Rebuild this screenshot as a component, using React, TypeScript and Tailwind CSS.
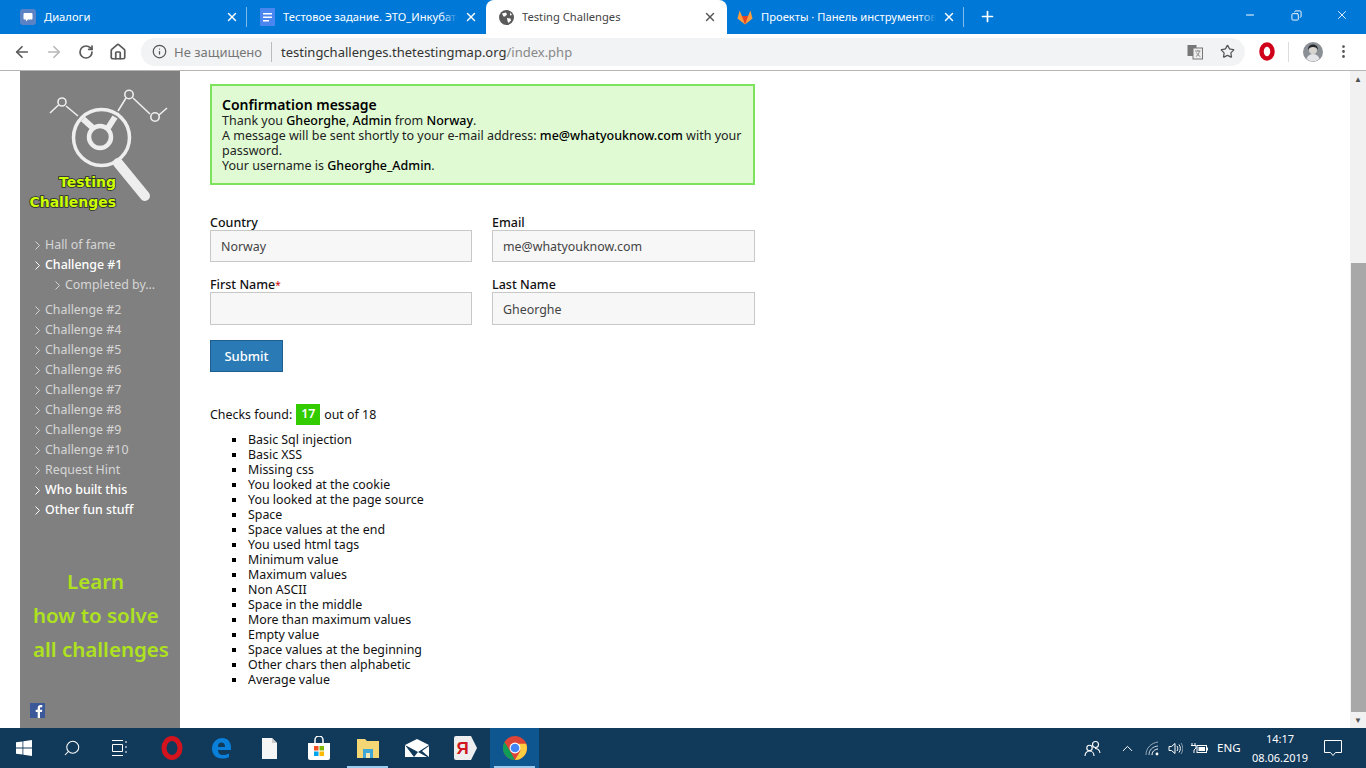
import { ArrowLeft, ArrowRight, RotateCw, Home, Info, Star, X, Plus, Minus, Copy, MoreVertical, Search, ChevronUp } from "lucide-react";

const FONT = "font-['Noto_Sans',sans-serif]";

// ─── Browser chrome ───────────────────────────────────────────────────────────

function ChatFavicon() {
  return (
    <svg width="16" height="16" viewBox="0 0 16 16">
      <rect width="16" height="16" rx="3" fill="#5b82c4" />
      <path d="M4.500 4h7a1 1 0 0 1 1 1v4.500a1 1 0 0 1-1 1H8L6 12.500V10.500H4.500a1 1 0 0 1-1-1V5a1 1 0 0 1 1-1z" fill="#fff" />
    </svg>
  );
}

function DocsFavicon() {
  return (
    <svg width="15" height="18" viewBox="0 0 15 18">
      <rect width="15" height="18" rx="1" fill="#4a86f0" />
      <path d="M3 5h9v1.500H3zM3 8.500h9V10H3zM3 12h6v1.500H3z" fill="#fff" />
    </svg>
  );
}

function GlobeFavicon() {
  return (
    <svg width="15" height="15" viewBox="0 0 15 15">
      <circle cx="7.500" cy="7.500" r="7.500" fill="#5a5a5a" />
      <path d="M3 3.500 7 2.500 8 4.500 6 6.500 4.500 6.500zM8 8l3.500.5.5 2-2.500 2.500-1-2zM11 2.500l2 2.500-2 .5z" fill="#fff" />
    </svg>
  );
}

function GitlabFavicon() {
  return (
    <svg width="17" height="16" viewBox="0 0 17 16">
      <path d="M8.500 16 0.500 9.500 2.800 1l2.400 6h6.600l2.400-6 2.300 8.500z" fill="#fc9d3c" />
      <path d="M8.500 16 5.200 7h6.600z" fill="#e24329" />
    </svg>
  );
}

function Tab({ icon, title, active, divider }: { icon: React.ReactNode; title: string; active?: boolean; divider?: boolean }) {
  return (
    <div className={`relative flex h-[34px] w-[239px] items-center pr-[8px] pl-[12px] ${active ? "mr-[-2px] w-[241px] rounded-t-lg bg-white pr-[10px] text-[#444]" : "text-white"}`}>
      <div className="flex w-[16px] shrink-0 items-center justify-center">{icon}</div>
      <div className="relative mr-[6px] ml-[8px] flex-1 overflow-hidden text-[11.2px] whitespace-nowrap">
        {title}
        {!active && <div className="absolute top-0 right-0 h-full w-[16px] bg-gradient-to-r from-transparent to-[#0078d7]" />}
      </div>
      <X size={14} strokeWidth={2.4} className={active ? "text-[#555]" : "text-white"} />
      {divider && <div className="absolute top-[7px] right-0 h-[20px] w-px bg-white/50" />}
    </div>
  );
}

function TabStrip() {
  return (
    <div className="flex h-[34px] items-start bg-[#0078d7] pl-[8px]">
      <Tab icon={<ChatFavicon />} title="Диалоги" divider />
      <Tab icon={<DocsFavicon />} title="Тестовое задание. ЭТО_Инкубатор" />
      <Tab icon={<GlobeFavicon />} title="Testing Challenges" active />
      <Tab icon={<GitlabFavicon />} title="Проекты · Панель инструментов" divider />
      <Plus size={17} strokeWidth={2.4} className="mt-[8px] ml-[15px] text-white" />
      <div className="mr-px ml-auto flex items-start text-white">
        <div className="flex h-[30px] w-[46px] items-center justify-center"><Minus size={12} /></div>
        <div className="flex h-[30px] w-[46px] items-center justify-center"><Copy size={11} className="-scale-x-100" /></div>
        <div className="flex h-[30px] w-[46px] items-center justify-center"><X size={14} strokeWidth={1.5} /></div>
      </div>
    </div>
  );
}

function Toolbar() {
  return (
    <div className="flex h-[37px] items-center border-b border-[#b5b5b5] bg-white pb-px">
      <div className="flex w-[141px] items-center pl-[13px] text-[#5a5a5a]">
        <ArrowLeft size={18} strokeWidth={2.3} />
        <ArrowRight size={18} strokeWidth={2.3} className="ml-[14px] text-[#b8b8b8]" />
        <RotateCw size={16} strokeWidth={2.6} className="ml-[15px]" />
        <Home size={18} strokeWidth={2.3} className="ml-[15px]" />
      </div>
      <div className="flex h-[28px] w-[1104px] items-center rounded-full bg-[#f1f3f4] pl-[11px] text-[13px]">
        <Info size={15} className="text-[#555]" />
        <span className="ml-[7px] pt-[2px] text-[#777]">Не защищено</span>
        <div className="mx-[9px] h-[20px] w-px bg-[#bbb]" />
        <span className="pt-[2px] text-[#333]">testingchallenges.thetestingmap.org</span>
        <span className="pt-[2px] text-[#888]">/index.php</span>
        <svg width="16" height="16" viewBox="0 0 16 16" className="mr-[17px] ml-auto">
          <rect x="0.500" y="1" width="9" height="11" fill="#777" />
          <rect x="6" y="4" width="9.500" height="11" fill="#eee" stroke="#777" />
          <path d="M8 7h5.500M10.800 6v1M9 12.500c2-1 3-3 3.300-5.500M9.500 8.500c.7 2 2 3.200 3.800 4" stroke="#777" fill="none" strokeWidth=".8" />
        </svg>
        <Star size={15} strokeWidth={2} className="mr-[10px] text-[#555]" />
      </div>
      <svg width="16" height="19" viewBox="0 0 16 19" className="ml-[14px]">
        <ellipse cx="8" cy="9.500" rx="5.500" ry="7" fill="none" stroke="#d0021b" strokeWidth="4.500" />
      </svg>
      <div className="ml-[13px] h-[20px] w-px bg-[#ddd]" />
      <svg width="20" height="20" viewBox="0 0 20 20" className="ml-[14px]">
        <circle cx="10" cy="10" r="10" fill="#8b8f96" />
        <circle cx="10" cy="8" r="4" fill="#d8d4d0" />
        <path d="M5 8c0-4 2.500-5.500 5-5.500S15 4 15 8c-1-2-2.500-3-5-3S6 6 5 8z" fill="#26282c" />
        <path d="M3.500 17c1-3.500 3.500-5 6.500-5s5.500 1.500 6.500 5a10 10 0 0 1-13 0z" fill="#e3e5e8" />
      </svg>
      <MoreVertical size={17} className="ml-[12px] text-[#555]" />
    </div>
  );
}

// ─── Sidebar ──────────────────────────────────────────────────────────────────

function Logo() {
  return (
    <svg width="160" height="150" viewBox="0 0 160 150" className="shrink-0">
      <g fill="none" stroke="#eee" strokeWidth="1.600">
        <path d="M30 42 38.500 34M46 35 58 45M98 40 106 27M113 27 130 43M139 44 147 37" />
        <circle cx="42" cy="31" r="4" />
        <circle cx="109" cy="23.500" r="4.200" />
        <circle cx="135" cy="46" r="4.200" />
      </g>
      <circle cx="81.500" cy="66.500" r="28" fill="none" stroke="#eee" strokeWidth="3.500" />
      <circle cx="80" cy="66" r="11" fill="none" stroke="#eee" strokeWidth="4.500" />
      <path d="M63 48 73 57M95 46 88 57" stroke="#eee" strokeWidth="6" />
      <path d="M98 92 125 125" stroke="#eee" strokeWidth="10" strokeLinecap="round" />
      <text x="96" y="115.500" textAnchor="end" fill="#ccff00" stroke="#2a2a2a" strokeWidth="1.600" paintOrder="stroke" className="font-['DejaVu_Sans',sans-serif] text-[14px] font-bold">Testing</text>
      <text x="96" y="135.500" textAnchor="end" fill="#ccff00" stroke="#2a2a2a" strokeWidth="1.600" paintOrder="stroke" className="font-['DejaVu_Sans',sans-serif] text-[14px] font-bold">Challenges</text>
    </svg>
  );
}

function NavItem({ label, bright, sub }: { label: string; bright?: boolean; sub?: boolean }) {
  return (
    <div className={`flex h-[20px] items-center ${sub ? "pl-[35px]" : "pl-[15px]"} ${bright ? "font-medium text-white" : "text-[#d6d6d6]"}`}>
      <svg width="10" height="9" viewBox="0 0 10 9" fill="none" stroke="currentColor" className="shrink-0"><path d="M.5.500 4.500 4.500.5 8.500" /></svg>
      <span>{label}</span>
    </div>
  );
}

function Sidebar() {
  return (
    <aside className="flex w-[160px] shrink-0 flex-col bg-[#808080] text-[12.4px]">
      <Logo />
      <div className="mt-[14px]">
        <NavItem label="Hall of fame" />
        <NavItem label="Challenge #1" bright />
        <NavItem label="Completed by..." sub />
        <div className="mt-[5px]">
          {["#2", "#4", "#5", "#6", "#7", "#8", "#9", "#10"].map((n) => (
            <NavItem key={n} label={`Challenge ${n}`} />
          ))}
        </div>
        <NavItem label="Request Hint" />
        <NavItem label="Who built this" bright />
        <NavItem label="Other fun stuff" bright />
      </div>
      <div className="mt-[44px] pl-[13px] text-[20.5px] leading-[34px] font-semibold text-[#aee21e]">
        <div className="pl-[34px]">Learn</div>
        <div>how to solve</div>
        <div>all challenges</div>
      </div>
      <svg width="15" height="15" viewBox="0 0 15 15" className="mt-[37px] ml-[10px]">
        <rect width="15" height="15" fill="#3b5998" />
        <path d="M10 15V9h2l.3-2.300H10V5.300c0-.7.2-1.100 1.100-1.100h1.200v-2C12 2.100 11.400 2 10.600 2 8.900 2 7.700 3 7.700 5v1.700H5.700V9h2v6z" fill="#fff" />
      </svg>
    </aside>
  );
}

// ─── Main content ─────────────────────────────────────────────────────────────

function Field({ label, value, required, tall, wide }: { label: string; value: string; required?: boolean; tall?: boolean; wide?: boolean }) {
  return (
    <div className={wide ? "w-[263px]" : "w-[262px]"}>
      <div className="h-[15px] text-[12.5px] leading-[16px] font-medium text-[#111]">
        {label}
        {required && <span className="text-[10px] font-normal text-[#c00]">*</span>}
      </div>
      <div className={`flex items-center border border-[#c8c8c8] bg-[#f7f7f7] px-[10px] pt-[3px] text-[#444] ${tall ? "h-[33px]" : "h-[32px]"}`}>
        {value}
      </div>
    </div>
  );
}

const CHECKS = [
  "Basic Sql injection",
  "Basic XSS",
  "Missing css",
  "You looked at the cookie",
  "You looked at the page source",
  "Space",
  "Space values at the end",
  "You used html tags",
  "Minimum value",
  "Maximum values",
  "Non ASCII",
  "Space in the middle",
  "More than maximum values",
  "Empty value",
  "Space values at the beginning",
  "Other chars then alphabetic",
  "Average value",
];

function Main() {
  return (
    <main className="flex-1 pt-[13px] pl-[30px] text-[12.4px] text-[#222]">
      <div className="h-[101px] w-[545px] border-2 border-[#7de35c] bg-[#e0fbd4] px-[10px] pt-[11px] text-[12.5px] leading-[15px]">
        <div className="h-[16px] text-[14px] font-semibold text-black">Confirmation message</div>
        <div>Thank you <b className="font-medium text-black">Gheorghe</b>, <b className="font-medium text-black">Admin</b> from <b className="font-medium text-black">Norway</b>.</div>
        <div>A message will be sent shortly to your e-mail address: <b className="font-medium text-black">me@whatyouknow.com</b> with your password.</div>
        <div>Your username is <b className="font-medium text-black">Gheorghe_Admin</b>.</div>
      </div>
      <div className="mt-[30px] flex gap-[20px]">
        <Field label="Country" value="Norway" />
        <Field label="Email" value="me@whatyouknow.com" wide />
      </div>
      <div className="mt-[15px] flex gap-[20px]">
        <Field label="First Name" value="" required tall />
        <Field label="Last Name" value="Gheorghe" tall wide />
      </div>
      <div className="mt-[15px] flex h-[32px] w-[73px] items-center justify-center border border-[#1f5f8f] bg-[#2a7ab5] pt-[2px] text-[13px] font-medium text-white">
        Submit
      </div>
      <div className="mt-[32px] flex h-[21px] items-center text-[#111]">
        <span className="pt-[2px]">Checks found:</span>
        <span className="mx-[4px] flex h-[21px] w-[24px] items-center justify-center bg-[#33cc00] font-semibold text-white">17</span>
        <span className="pt-[2px]">out of 18</span>
      </div>
      <ul className="mt-[7px] list-none pl-[22px] leading-[15px] text-[#111]">
        {CHECKS.map((c) => (
          <li key={c} className="flex items-center">
            <span className="h-[4px] w-[4px] bg-black" />
            <span className="ml-[12px]">{c}</span>
          </li>
        ))}
      </ul>
    </main>
  );
}

function Scrollbar() {
  return (
    <div className="flex w-[16px] shrink-0 flex-col items-center bg-[#f1f1f1]">
      <div className="h-[16px] text-[8px] leading-[16px] text-[#505050]">▲</div>
      <div className="mt-[176px] h-[449px] w-[15px] bg-[#a8a8a8]" />
      <div className="mt-auto h-[16px] text-[8px] leading-[16px] text-[#505050]">▼</div>
    </div>
  );
}

// ─── Taskbar ──────────────────────────────────────────────────────────────────

function TaskIcon({ children, active, underline, narrow }: { children: React.ReactNode; active?: boolean; underline?: boolean; narrow?: boolean }) {
  return (
    <div className={`relative flex h-[40px] items-center justify-center ${narrow ? "w-[48px]" : "w-[49px]"} ${active ? "bg-[#0e568f]" : ""}`}>
      {children}
      {(active || underline) && <div className="absolute bottom-0 left-[4px] h-[2px] w-[41px] bg-[#9ccbee]" />}
    </div>
  );
}

function Taskbar() {
  return (
    <div className="flex h-[40px] items-center bg-[#11395a] text-white">
      <TaskIcon narrow>
        <svg width="16" height="16" viewBox="0 0 16 16" fill="#fff"><path d="M0 2.300 6.500 1.400V7.600H0zM7.300 1.300 16 0V7.600H7.300zM0 8.400H6.500V14.600L0 13.700zM7.300 8.400H16V16L7.300 14.700z" /></svg>
      </TaskIcon>
      <TaskIcon narrow><Search size={18} strokeWidth={1.4} className="-scale-x-100" /></TaskIcon>
      <TaskIcon narrow>
        <svg width="16" height="16" viewBox="0 0 16 16" fill="none" stroke="#fff"><path d="M0 .5h11M0 15.500h11M.5 4.500h10v7H.5zM14 1v2M14 6v2M14 11v2" /></svg>
      </TaskIcon>
      <div className="w-[3px]" />
      <TaskIcon>
        <svg width="22" height="24" viewBox="0 0 22 24"><ellipse cx="11" cy="12" rx="8" ry="9.500" fill="none" stroke="#d3141f" strokeWidth="5" /></svg>
      </TaskIcon>
      <TaskIcon>
        <svg width="22" height="22" viewBox="0 0 22 22"><path d="M2 12C2 5 7 1 12 1c6 0 9 4 9 10v2H8c0 3 2 5 5 5 2 0 4-.5 6-1.500v3.500c-2 1-4 1.500-7 1.500-6 0-10-4-10-10zm6-2h7c0-3-1-4.500-3.500-4.500S8 7 8 10z" fill="#0a7fd9" /></svg>
      </TaskIcon>
      <TaskIcon>
        <svg width="15" height="21" viewBox="0 0 15 21"><path d="M0 0h10l5 5v16H0z" fill="#f5f5f5" /><path d="M10 0l5 5h-5z" fill="#ccc" /></svg>
      </TaskIcon>
      <TaskIcon>
        <svg width="22" height="24" viewBox="0 0 22 24">
          <path d="M7 7V4a4 4 0 0 1 8 0v3" fill="none" stroke="#fff" strokeWidth="1.500" />
          <path d="M0 7h22v15a2 2 0 0 1-2 2H2a2 2 0 0 1-2-2z" fill="#fff" />
          <path d="M6 10h4.500v4.500H6z" fill="#f25022" /><path d="M11.500 10H16v4.500h-4.500z" fill="#7fba00" /><path d="M6 15.500h4.500V20H6z" fill="#00a4ef" /><path d="M11.500 15.500H16V20h-4.500z" fill="#ffb900" />
        </svg>
      </TaskIcon>
      <TaskIcon underline>
        <svg width="22" height="20" viewBox="0 0 22 20"><path d="M0 1h8l2 2h12v17H0z" fill="#f4d675" /><path d="M6 11h10v9H6z" fill="#3fa6d8" /><path d="M9 15h4v5H9z" fill="#f4e7b8" /></svg>
      </TaskIcon>
      <TaskIcon>
        <svg width="24" height="18" viewBox="0 0 24 18"><path d="M0 6 12 0l12 6v12H0z" fill="#fff" /><path d="M0 6l13 7 11-7v1L17 12l7 6H22l-9-5-4 5z" fill="#11395a" /></svg>
      </TaskIcon>
      <TaskIcon>
        <svg width="23" height="24" viewBox="0 0 23 24">
          <path d="M2 0h15l6 12-6 12H2a2 2 0 0 1-2-2V2a2 2 0 0 1 2-2z" fill="#eee" />
          <text x="8.500" y="18" textAnchor="middle" fill="#d0161e" className="font-['Liberation_Sans',sans-serif] text-[17px] font-bold">Я</text>
        </svg>
      </TaskIcon>
      <TaskIcon active>
        <svg width="24" height="24" viewBox="0 0 22 22">
          <circle cx="11" cy="11" r="11" fill="#db4437" />
          <path d="M11 22A11 11 0 0 1 1.400 5.500L6.500 14l4.500 8z" fill="#0f9d58" />
          <path d="M22 11a11 11 0 0 1-11 11l5-8.500-2-6.500h7.200c.500 1.200.8 2.600.8 4z" fill="#ffcd40" />
          <circle cx="11" cy="11" r="5" fill="#fff" /><circle cx="11" cy="11" r="4" fill="#4285f4" />
        </svg>
      </TaskIcon>
      <div className="ml-auto flex items-center text-[12px]">
        <svg width="17" height="17" viewBox="0 0 17 17" fill="none" stroke="#fff" strokeWidth="1.100">
          <circle cx="11.500" cy="4.500" r="3" /><circle cx="5.500" cy="8" r="2.700" />
          <path d="M1 16c0-3 2-5 4.500-5S10 13 10 16M11 8.500c2.500 0 4.500 1.500 5 4.500" />
        </svg>
        <ChevronUp size={17} strokeWidth={1.4} className="ml-[18px]" />
        <svg width="15" height="15" viewBox="0 0 15 15" fill="none" stroke="#fff" className="ml-[9px]">
          <path d="M1 14C1 7 6 2 13 1" opacity=".55" /><path d="M4 14c0-5 3.500-8.500 9-9" opacity=".75" /><path d="M7 14c0-3 2-5.500 6-6" />
          <circle cx="12" cy="13" r="1.400" fill="#fff" stroke="none" />
        </svg>
        <svg width="15" height="15" viewBox="0 0 15 15" fill="none" stroke="#fff" className="ml-[8px]">
          <path d="M1 5.500h2.500L7 2.500v10l-3.500-3H1z" /><path d="M9 5c1 1.500 1 3.500 0 5M11 3.500c1.800 2.500 1.800 5.500 0 8" /><path d="M13 2c2.300 3.500 2.300 7.500 0 11" opacity=".5" />
        </svg>
        <svg width="17" height="13" viewBox="0 0 17 13" className="ml-[8px]">
          <path d="M1 1v2.500M4 1v2.500M0 3.500h5V6L3 8v3" fill="none" stroke="#fff" />
          <rect x="6" y="3.500" width="9.500" height="7" fill="none" stroke="#fff" />
          <rect x="7.500" y="5" width="6.500" height="4" fill="#fff" />
          <path d="M16 5.500h1v3h-1z" fill="#fff" />
        </svg>
        <span className="ml-[9px] w-[22px] text-[11.5px]">ENG</span>
        <div className="ml-[13px] flex w-[56px] flex-col items-center text-[11px] leading-[19px]">
          <span>14:17</span>
          <span>08.06.2019</span>
        </div>
        <svg width="18" height="17" viewBox="0 0 18 17" fill="none" stroke="#fff" className="mr-[24px] ml-[16px]">
          <path d="M.5.500h17v12h-6l-2.500 3-2.500-3h-6z" />
        </svg>
      </div>
    </div>
  );
}

export default function App() {
  return (
    <div className={`flex h-screen w-[1366px] flex-col overflow-hidden bg-white ${FONT}`}>
      <TabStrip />
      <Toolbar />
      <div className="flex min-h-0 flex-1 pl-[20px]">
        <Sidebar />
        <Main />
        <Scrollbar />
      </div>
      <Taskbar />
    </div>
  );
}
